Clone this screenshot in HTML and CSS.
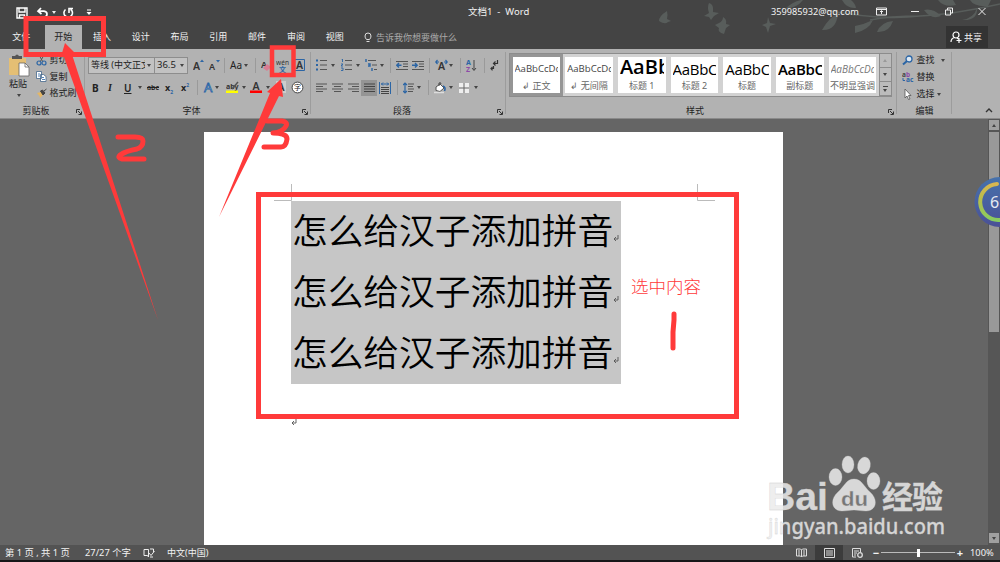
FILE: index.html
```html
<!DOCTYPE html>
<html lang="zh-CN">
<head>
    <meta charset="UTF-8">
    <meta name="viewport" content="width=device-width, initial-scale=1.0">
    <title>文档1 - Word</title>
    <link rel="stylesheet" href="styles.css">
</head>
<body>
    <header class="top">
        <!-- Leaves and birds behind the title bar -->
        <svg class="top-art" width="400" height="49" viewBox="600 0 400 49">
            <g fill="#585d5b">
                <path d="M667 11q-8 5-8 10 6 4 9 1l3-1-4-2q1-4 0-8z"/>
                <path d="M709 3q5 1 4 9l6 1-5 3-3 4-2-3-5-1 5-3q-2-6 0-10z"/>
                <path d="M723 17q4 2 3 7l4 1-4 3-2 6q-7-2-5-6l-4-3 4-2q4-2 4-6z"/>
                <path d="M768 17l2 6 6 1-6 2-2 7-2-6-4-2 5-2z"/>
                <path d="M801 0q-9 2-16 9 12-1 18-9z"/>
                <path d="M838 14q-8 2-16 16 14 1 16-16z"/>
                <path d="M855 26q10-2 18-6-4 10-18 13z"/>
                <path d="M842 0q5 9 14 8-1-5-5-8z"/>
                <path d="M893 21q-12 1-16 11 12 1 16-11z"/>
                <path d="M924 10q9-2 17 6-10 4-17-6z"/>
                <path d="M938 0q6 8 18 5l-3-5z"/>
                <path d="M962 20q12-2 15-12 1 13-15 12z"/>
                <path d="M970 0q4 7 18 6l3-6z"/>
            </g>
            <path d="M820 9q60 12 100 7 30-1 80-12M870 20q20-4 50-4" fill="none" stroke="#585d5b" stroke-width="1.5"/>
        </svg>

        <div class="titlebar">
            <div class="quick">
                <svg width="12" height="12" viewBox="0 0 12 12"><path d="M1 1h10v10H1zM3 1v4h6V1M3.5 11V8h5v3" fill="none" stroke="#fff" stroke-width="1.4"/></svg>
                <svg width="13" height="12" viewBox="0 0 13 12"><path d="M5 1L2 4.2 5.500 7M2 4.200h6q3 .3 3 3t-3.500 3" fill="none" stroke="#fff" stroke-width="1.700"/></svg>
                <i class="caret light"></i>
                <svg width="12" height="12" viewBox="0 0 12 12"><path d="M3.500 2.500A4.300 4.300 0 1 0 8.500 2.200M7 6V1.500h4" fill="none" stroke="#fff" stroke-width="1.600"/></svg>
                <svg width="6" height="7" viewBox="0 0 6 7"><path d="M1 1h4" stroke="#fff"/><path d="M.5 3h5L3 6z" fill="#fff"/></svg>
            </div>
            <div class="doc-title">文档1 &nbsp;- &nbsp;Word</div>
            <div class="account">359985932@qq.com</div>
            <div class="window-buttons">
                <svg width="11" height="9" viewBox="0 0 11 9"><path d="M.5 1h10v7H.5zM.5 2.500h10M5.500 7V4M4 5l1.500-1.500L7 5" fill="none" stroke="#eee"/></svg>
                <svg width="8" height="9" viewBox="0 0 8 9"><path d="M0 4.500h8" stroke="#eee"/></svg>
                <svg width="8" height="9" viewBox="0 0 8 9"><path d="M.5 3h5v5h-5zM2.500 3V1h5v5h-2" fill="none" stroke="#eee"/></svg>
                <svg width="8" height="9" viewBox="0 0 8 9"><path d="M.5 1l7 7M7.500 1l-7 7" stroke="#eee"/></svg>
            </div>
        </div>

        <nav class="tabs">
            <span class="tab file">文件</span>
            <span class="tab active">开始</span>
            <span class="tab">插入</span>
            <span class="tab">设计</span>
            <span class="tab">布局</span>
            <span class="tab">引用</span>
            <span class="tab">邮件</span>
            <span class="tab">审阅</span>
            <span class="tab">视图</span>
            <span class="tell-me">
                <svg width="8" height="11" viewBox="0 0 8 11"><path d="M2.500 7.500Q1 6 1 4a3 3 0 0 1 6 0q0 2-1.500 3.500zM2.500 9.500h3" fill="none" stroke="#ddd"/></svg>
                告诉我你想要做什么
            </span>
            <span class="share">
                <svg width="12" height="12" viewBox="0 0 12 12"><circle cx="6" cy="4" r="3" fill="none" stroke="#fff" stroke-width="1.200"/><path d="M1 11q0-3.500 3.500-4.500M7 7l1.500 1M9 7v5M6.500 9.500h5" fill="none" stroke="#fff" stroke-width="1.200"/></svg>
                共享
            </span>
        </nav>
    </header>

    <section class="ribbon">
        <!-- Clipboard -->
        <div class="group clipboard">
            <div class="clip-body">
                <div class="paste">
                    <svg width="22" height="24" viewBox="0 0 22 24"><path d="M1 4h17v17H1z" fill="#e5bf74"/><path d="M4 2h3q2-3 4 0h3v3H4z" fill="#555"/><path d="M11 9h6l4 4v9H11z" fill="#fff" stroke="#666" stroke-width=".8"/><path d="M17 9v4h4" fill="none" stroke="#666" stroke-width=".8"/></svg>
                    <span>粘贴</span>
                    <i class="caret"></i>
                </div>
                <div class="clip-list">
                    <div><svg width="11" height="11" viewBox="0 0 11 11"><path d="M3 0l4 7M8 0L4 7" stroke="#555"/><g fill="none" stroke="#2b65a5" stroke-width="1.200"><circle cx="3" cy="8" r="2"/><circle cx="8" cy="8" r="2"/></g></svg>剪切</div>
                    <div><svg width="11" height="11" viewBox="0 0 11 11"><g fill="#fff" stroke="#44678b" stroke-width=".8"><path d="M.5.500h5v7h-5zM4.500 3.500h3l2.500 2v5H4.500z"/></g><path d="M2 3h2M2 5h2M6 6.500h2M6 8.500h3" stroke="#2b65a5" stroke-width=".8"/></svg>复制</div>
                    <div><svg width="11" height="11" viewBox="0 0 11 11"><path d="M1 5l4-1 2 3-3 3q0-2-3-5z" fill="#e5b765"/><path d="M4.500 3l2-1 2.500 3-2 2zM8 3l2.500-2" fill="#444" stroke="#444"/></svg>格式刷</div>
                </div>
            </div>
            <div class="group-name">剪贴板</div>
            <svg class="launcher" width="6" height="6" viewBox="0 0 6 6"><path d="M.5 4V.5H4M2 2l3 3M5.500 2.500v3h-3" fill="none" stroke="#333"/></svg>
        </div>

        <!-- Font -->
        <div class="group font">
            <div class="font-row-1">
                <div class="combo"><span>等线 (中文正文)</span><i class="caret"></i></div>
                <div class="combo size"><span>36.5</span><i class="caret"></i></div>
                <svg width="12" height="13" viewBox="0 0 12 13"><text x="0" y="11" class="glyph">A</text><path d="M7 3l2-2.500L11 3z" fill="#2b65a5"/></svg>
                <svg width="12" height="13" viewBox="0 0 12 13"><text x="0" y="11" class="glyph small">A</text><path d="M7 1h4L9 3.500z" fill="#2b65a5"/></svg>
                <i class="sep"></i>
                <span class="aa">Aa</span>
                <i class="caret"></i>
                <i class="sep"></i>
                <svg width="12" height="13" viewBox="0 0 12 13"><text x="0" y="9" class="glyph small">A</text><path d="M2 9l4-4 4 3-4 4z" fill="#d97c92"/></svg>
                <svg width="14" height="15" viewBox="0 0 14 15"><text x="0" y="6.500" font-size="6.500" fill="#333" textLength="13">wén</text><text x="3" y="13.500" font-size="7" font-weight="700" fill="#2b65a5">文</text></svg>
                <svg width="11" height="12" viewBox="0 0 11 12"><path d="M.5.500h10v11H.5z" fill="none" stroke="#2b65a5"/><text x="2" y="9.500" class="glyph">A</text></svg>
            </div>
            <div class="font-row-2">
                <b>B</b>
                <em>I</em>
                <u>U</u>
                <i class="caret"></i>
                <s>abc</s>
                <span class="script">x<sub>2</sub></span>
                <span class="script">x<sup>2</sup></span>
                <i class="sep"></i>
                <svg width="11" height="13" viewBox="0 0 11 13"><text x="1" y="11" font-size="13" fill="#c4d3e3" stroke="#2b65a5" stroke-width=".8">A</text></svg>
                <i class="caret"></i>
                <svg width="14" height="13" viewBox="0 0 14 13"><text x="0" y="8" font-size="7" font-weight="700" fill="#333">aby</text><path d="M6 8l6-7" stroke="#555" stroke-width="1.500"/><path d="M0 9.500h12V12H0z" fill="#ff0"/></svg>
                <i class="caret"></i>
                <svg width="13" height="13" viewBox="0 0 13 13"><text x="2.500" y="8.500" class="glyph">A</text><path d="M0 9.500h12V12H0z" fill="#f00"/></svg>
                <i class="caret"></i>
                <svg width="11" height="13" viewBox="0 0 11 13"><path d="M0 0h10v12H0z" fill="#ccc"/><text x="1.500" y="10" class="glyph">A</text></svg>
                <svg width="13" height="13" viewBox="0 0 13 13"><circle cx="6.500" cy="6.500" r="5.400" fill="#fff" stroke="#333" stroke-width=".9"/><text x="3" y="9" font-size="7" fill="#222">字</text></svg>
            </div>
            <div class="group-name">字体</div>
            <svg class="launcher" width="6" height="6" viewBox="0 0 6 6"><path d="M.5 4V.5H4M2 2l3 3M5.500 2.500v3h-3" fill="none" stroke="#333"/></svg>
        </div>

        <!-- Paragraph -->
        <div class="group paragraph">
            <div class="para-row-1">
                <svg width="11" height="12" viewBox="0 0 11 12"><path d="M0 1.500h2M0 6h2M0 10.500h2" stroke="#2b65a5" stroke-width="2"/><path d="M4 1.500h7M4 6h7M4 10.500h7" stroke="#555"/></svg>
                <i class="caret"></i>
                <svg width="11" height="12" viewBox="0 0 11 12"><path d="M.5 0h1v3M0 5h2l-2 2h2M0 9h2v2.500H0" fill="none" stroke="#2b65a5" stroke-width=".9"/><path d="M4 1.500h7M4 6h7M4 10.500h7" stroke="#555"/></svg>
                <i class="caret"></i>
                <svg width="13" height="12" viewBox="0 0 13 12"><path d="M1 0v3M3 5h2v2H3M7 9v3" fill="none" stroke="#2b65a5" stroke-width="1.400"/><path d="M3 1.500h8M7 6h5M9 10.500h3" stroke="#555"/></svg>
                <i class="caret"></i>
                <i class="sep"></i>
                <svg width="12" height="11" viewBox="0 0 12 11"><path d="M0 1.500h12M7 4h5M7 6.500h5M0 9.500h12" stroke="#555"/><path d="M5.500 5.300H1M3 3L.8 5.300 3 7.500" fill="none" stroke="#2b65a5" stroke-width="1.400"/></svg>
                <svg width="12" height="11" viewBox="0 0 12 11"><path d="M0 1.500h12M7 4h5M7 6.500h5M0 9.500h12" stroke="#555"/><path d="M0 5.300h5M3 3l2.200 2.300L3 7.500" fill="none" stroke="#2b65a5" stroke-width="1.400"/></svg>
                <i class="sep"></i>
                <svg width="13" height="12" viewBox="0 0 13 12"><text x="3" y="11" class="glyph">A</text><path d="M4 3H1M2.500 1L.7 3l1.800 2M9 3h3M10.500 1l1.800 2-1.800 2" fill="none" stroke="#2b65a5" stroke-width="1.200"/></svg>
                <i class="caret"></i>
                <i class="sep"></i>
                <svg width="11" height="13" viewBox="0 0 11 13"><text x="0" y="6" font-size="7" font-weight="700" fill="#2b65a5">A</text><text x="0" y="12.500" font-size="7" font-weight="700" fill="#8d4aa8">Z</text><path d="M8 1v10M6 9l2 2.500L10 9" fill="none" stroke="#444"/></svg>
                <i class="sep"></i>
                <svg width="9" height="11" viewBox="0 0 9 11"><path d="M7.500 0v3.500H4M5.500 1.500l-2 2 2 2M3.500 6v2.500H1M2.500 6.800L1 8.500l1.500 1.800" fill="none" stroke="#333" stroke-width="1.200"/></svg>
            </div>
            <div class="para-row-2">
                <svg width="11" height="10" viewBox="0 0 11 10"><path d="M0 1h11M0 3.500h7M0 6h11M0 8.500h7" stroke="#555"/></svg>
                <svg width="11" height="10" viewBox="0 0 11 10"><path d="M0 1h11M2 3.500h7M0 6h11M2 8.500h7" stroke="#555"/></svg>
                <svg width="11" height="10" viewBox="0 0 11 10"><path d="M0 1h11M4 3.500h7M0 6h11M4 8.500h7" stroke="#555"/></svg>
                <span class="pressed"><svg width="11" height="10" viewBox="0 0 11 10"><path d="M0 1h11M0 3.500h11M0 6h11M0 8.500h11" stroke="#444"/></svg></span>
                <svg width="12" height="12" viewBox="0 0 12 12"><path d="M.5 0v12M11.500 0v12M2 2h8M4 .5L2.500 2 4 3.500M8 .5L9.500 2 8 3.500" fill="none" stroke="#2b65a5"/><path d="M2 5.500h8M2 7.500h8M2 9.500h8M2 11.500h8" stroke="#444"/></svg>
                <i class="sep"></i>
                <svg width="11" height="12" viewBox="0 0 11 12"><path d="M2 1v10M0 3l2-2 2 2M0 9l2 2 2-2" fill="none" stroke="#2b65a5" stroke-width="1.200"/><path d="M5 2h6M5 4.500h5M5 7h6M5 9.500h5" stroke="#555"/></svg>
                <i class="caret"></i>
                <i class="sep"></i>
                <svg width="12" height="12" viewBox="0 0 12 12"><path d="M2 5l4-3 4 4-4 3.500-4-1z" fill="#fff" stroke="#555"/><path d="M5 4V1q2-1 2 1" fill="none" stroke="#444"/><path d="M9 4q3 1 1.500 5" fill="none" stroke="#2b65a5" stroke-width="1.600"/><path d="M0 10.500h10" stroke="#ddd" stroke-width="1.500"/></svg>
                <i class="caret"></i>
                <svg width="10" height="10" viewBox="0 0 10 10"><path d="M0 0h10v10H0z" fill="#eee"/><path d="M5 0v10M0 5h10" stroke="#666"/></svg>
                <i class="caret"></i>
            </div>
            <div class="group-name">段落</div>
            <svg class="launcher" width="6" height="6" viewBox="0 0 6 6"><path d="M.5 4V.5H4M2 2l3 3M5.500 2.500v3h-3" fill="none" stroke="#333"/></svg>
        </div>

        <!-- Style gallery -->
        <div class="group styles">
            <div class="gallery">
                <div class="style selected"><p>AaBbCcDd</p><span>↲ 正文</span></div>
                <div class="style"><p>AaBbCcDd</p><span>↲ 无间隔</span></div>
                <div class="style"><p class="h1">AaBb</p><span>标题 1</span></div>
                <div class="style"><p class="h2">AaBbC</p><span>标题 2</span></div>
                <div class="style"><p class="h2">AaBbC</p><span>标题</span></div>
                <div class="style"><p class="h2 bold">AaBbC</p><span>副标题</span></div>
                <div class="style"><p class="subtle">AaBbCcDd</p><span>不明显强调</span></div>
                <div class="gallery-scroll">
                    <span class="off"><i class="caret up"></i></span>
                    <span><i class="caret"></i></span>
                    <span class="more"><i class="caret"></i></span>
                </div>
            </div>
            <div class="group-name">样式</div>
            <svg class="launcher" width="6" height="6" viewBox="0 0 6 6"><path d="M.5 4V.5H4M2 2l3 3M5.500 2.500v3h-3" fill="none" stroke="#333"/></svg>
        </div>

        <!-- Editing -->
        <div class="group editing">
            <div class="edit-list">
                <div><svg width="12" height="11" viewBox="0 0 12 11"><circle cx="7" cy="4" r="3" fill="#dce8f3" stroke="#2b65a5" stroke-width="1.300"/><path d="M5 6L1 9.500" stroke="#2b65a5" stroke-width="2"/></svg>查找<i class="caret far"></i></div>
                <div><svg width="12" height="12" viewBox="0 0 12 12"><text x="0" y="5.500" font-size="6.500" font-weight="700" fill="#444">a<tspan fill="#8d4aa8">b</tspan></text><text x="4" y="11" font-size="6.500" font-weight="700" fill="#2b65a5">ac</text><path d="M1 7v2.500h2" fill="none" stroke="#2b65a5"/></svg>替换</div>
                <div><svg width="12" height="11" viewBox="0 0 12 11"><path d="M3 0v9l2-2 1.500 3.500L8 10 6.500 6.500H9z" fill="#fff" stroke="#555" stroke-width=".8"/></svg>选择<i class="caret"></i></div>
            </div>
            <div class="group-name">编辑</div>
        </div>

        <svg class="collapse" width="8" height="5" viewBox="0 0 8 5"><path d="M1 4l3-3 3 3" fill="none" stroke="#333" stroke-width="1.400"/></svg>
    </section>

    <main class="workspace">
        <article class="page">
            <div class="margins">
                <svg width="18" height="17" viewBox="0 0 18 17"><path d="M17.500 0v16.500H0" fill="none" stroke="#bbb"/></svg>
                <svg width="18" height="17" viewBox="0 0 18 17"><path d="M.5 0v16.500H18" fill="none" stroke="#bbb"/></svg>
            </div>
            <div class="content">
                <div class="selection">
                    <p>怎么给汉子添加拼音<svg width="6" height="7" viewBox="0 0 6 7"><path d="M5 0v4H1M3 2L1 4l2 2" fill="none" stroke="#555" stroke-width=".9"/></svg></p>
                    <p>怎么给汉子添加拼音<svg width="6" height="7" viewBox="0 0 6 7"><path d="M5 0v4H1M3 2L1 4l2 2" fill="none" stroke="#555" stroke-width=".9"/></svg></p>
                    <p>怎么给汉子添加拼音<svg width="6" height="7" viewBox="0 0 6 7"><path d="M5 0v4H1M3 2L1 4l2 2" fill="none" stroke="#555" stroke-width=".9"/></svg></p>
                </div>
                <svg class="last-mark" width="6" height="7" viewBox="0 0 6 7"><path d="M5 0v4H1M3 2L1 4l2 2" fill="none" stroke="#555" stroke-width=".9"/></svg>
            </div>
        </article>
        <div class="scrollbar">
            <span class="scroll-btn"><i class="caret up"></i></span>
            <span class="thumb"></span>
            <span class="scroll-btn"><i class="caret"></i></span>
        </div>
    </main>

    <footer class="status">
        <span class="pages">第 1 页 , 共 1 页</span>
        <span class="words">27/27 个字</span>
        <svg class="proof" width="12" height="10" viewBox="0 0 12 10"><path d="M5 1.500H1v6h3.500L5.500 9V1.500zM7 1h3.500v3M6 5l2 2.500L11.500 3M7 9h3" fill="none" stroke="#eee"/></svg>
        <span class="lang">中文(中国)</span>
        <div class="views">
            <span><svg width="11" height="10" viewBox="0 0 11 10"><path d="M.5 1h4l1 1 1-1h4v7h-4l-1 1-1-1h-4zM5.500 2v7M2 3h2M2 5h2M2 7h2M7 3h2M7 5h2M7 7h2" fill="none" stroke="#ddd"/></svg></span>
            <span class="current"><svg width="11" height="10" viewBox="0 0 11 10"><path d="M.5.500h10v9H.5zM2 3h7M2 5h7M2 7h7" fill="none" stroke="#ddd"/></svg></span>
            <span><svg width="11" height="10" viewBox="0 0 11 10"><path d="M4 9H.5V.5h8V4M2 3h5M2 5h3M2 7h2" fill="none" stroke="#ddd"/><circle cx="8" cy="7" r="2.300" fill="none" stroke="#ddd" stroke-width="1.300"/></svg></span>
        </div>
        <b class="zoom-sign">−</b>
        <div class="slider"><i></i></div>
        <b class="zoom-sign">+</b>
        <span class="percent">100%</span>
    </footer>

    <!-- Hand-drawn marks and floating items over the window -->
    <svg class="overlay" width="1000" height="562" viewBox="0 0 1000 562">
        <defs>
            <linearGradient id="ball" x1="0" y1="0" x2="0" y2="1"><stop offset="0" stop-color="#4672ac"/><stop offset="1" stop-color="#4a5096"/></linearGradient>
            <linearGradient id="ring" x1="0" y1="0" x2="0" y2="1"><stop offset="0" stop-color="#d8b651"/><stop offset=".4" stop-color="#b9bd4c"/><stop offset="1" stop-color="#88cc60"/></linearGradient>
        </defs>
        <circle cx="999.500" cy="202" r="25" fill="url(#ball)"/>
        <path d="M997 184A18 18 0 0 0 999.500 220" fill="none" stroke="url(#ring)" stroke-width="4" stroke-linecap="round"/>
        <text x="990" y="208" font-size="16" fill="#e6eaf2">6</text>

        <g class="watermark">
            <text x="767" y="510" font-size="38" class="bai" textLength="61" lengthAdjust="spacingAndGlyphs">Bai</text>
            <path d="M854 479c8 0 10 8 16 13 9 8 6 19-4 19-5 0-8-1-12-1s-7 1-12 1c-10 0-13-11-4-19 6-5 8-13 16-13z"/>
            <ellipse cx="835.500" cy="477" rx="6.500" ry="8.500"/>
            <ellipse cx="848" cy="464.500" rx="6" ry="8.500"/>
            <ellipse cx="864" cy="465.500" rx="6.300" ry="8.500" transform="rotate(12 864 465.500)"/>
            <ellipse cx="873.500" cy="481" rx="6.500" ry="8.500"/>
            <text x="841" y="506" font-size="21" class="du" textLength="27" lengthAdjust="spacingAndGlyphs">du</text>
            <text x="882" y="508" font-size="31" font-weight="700" textLength="61">经验</text>
            <text x="768" y="534" font-size="21.500" font-weight="500" textLength="177" lengthAdjust="spacingAndGlyphs">jingyan.baidu.com</text>
        </g>

        <g fill="none" stroke="#ff3a3a">
            <rect x="26" y="18.500" width="77.500" height="36" stroke-width="5"/>
            <rect x="272" y="47.500" width="21.500" height="27.500" stroke-width="4.500"/>
            <rect x="258.500" y="194.500" width="478" height="222" stroke-width="5"/>
            <g stroke-width="5" stroke-linecap="round" stroke-linejoin="round">
                <path d="M118 137h17q8 0 8 4 0 6-6 8-11 2-17 6-3 3 2 4h22"/>
                <path d="M267 121h15q6 1 4 5-3 6-13 7 14 0 14 6-1 8-6 8h-17"/>
                <path d="M674 314v6l-1 12v16"/>
            </g>
        </g>
        <g fill="#ff3a3a">
            <path d="M65 43l10 10-3 1 .5 2L158 320 64 57l-2-4z"/>
            <path d="M281 79l2 18-4-1L219 217l51-124-3-1z"/>
            <text x="631" y="293" class="note" textLength="70">选中内容</text>
        </g>
    </svg>
</body>
</html>
```
FILE: styles.css
```css
* {
    box-sizing: border-box;
}

body {
    margin: 0;
    width: 1000px;
    height: 562px;
    overflow: hidden;
    display: flex;
    flex-direction: column;
    background-color: #161618;
    font-family: "Noto Sans", "Noto Sans CJK SC", sans-serif;
    font-size: 9px;
    line-height: 12px;
    color: #222;
}

p {
    margin: 0;
}

svg {
    display: block;
    flex-shrink: 0;
}

/* Title bar and tabs */
.top {
    position: relative;
    height: 49px;
    background-color: #444;
    color: #f2f2f2;
}

.top-art {
    position: absolute;
    right: 0;
    top: 0;
}

.titlebar {
    position: relative;
    height: 25px;
    display: grid;
    grid-template-columns: 468px 303px 105px 1fr;
    align-items: center;
    padding-bottom: 2px;
}

.quick {
    display: grid;
    grid-template-columns: 20px 16px 10px 24px 10px;
    align-items: center;
    padding: 2px 0 0 16px;
}

.doc-title {
    font-size: 9.500px;
}

.account {
    font-size: 9.200px;
}

.window-buttons {
    display: grid;
    grid-template-columns: 35px 34px 33px 10px;
}

.tabs {
    position: relative;
    display: flex;
    height: 24px;
    line-height: 23px;
}

.tab {
    width: 38.800px;
    text-align: center;
}

.file {
    width: 44.500px;
    padding-right: 2px;
}

.active {
    background-color: #b2b2b2;
    color: #222;
    width: 37.500px;
    margin-right: .5px;
}

.tell-me {
    display: flex;
    align-items: center;
    gap: 4px;
    padding-left: 10px;
    color: #aaa;
}

.share {
    display: flex;
    align-items: center;
    gap: 2px;
    margin: 1px 12px 1px auto;
    padding-left: 4px;
    width: 42px;
    background-color: #333;
}

/* Ribbon */
.ribbon {
    position: relative;
    display: flex;
    height: 70px;
    background-color: #b2b2b2;
    border-bottom: 1px solid #8a8a8a;
}

.group {
    position: relative;
    display: flex;
    flex-direction: column;
    padding-top: 5px;
}

.group::after {
    content: "";
    position: absolute;
    right: 0;
    top: 3px;
    height: 62px;
    border-right: 1px solid #9c9c9c;
}

.group-name {
    margin-top: auto;
    height: 13.500px;
    text-align: center;
}

.launcher {
    position: absolute;
    right: 3px;
    bottom: 3px;
}

.clipboard { width: 85px; }
.font { width: 226px; }
.paragraph { width: 195px; }
.styles { width: 391px; }
.editing { width: 55px; }

.clipboard .group-name {
    padding-right: 13px;
}

.font .group-name,
.paragraph .group-name,
.styles .group-name {
    padding-right: 13px;
}

.caret {
    width: 0;
    height: 0;
    border: 2.500px solid transparent;
    border-top: 3px solid #444;
    border-bottom: 0;
}

.caret.light {
    border-top-color: #eee;
}

.caret.up {
    border-top: 0;
    border-bottom: 3px solid #444;
}

.sep {
    width: 1px;
    height: 15px;
    background-color: #9a9a9a;
}

.glyph {
    font-size: 10.500px;
    font-weight: 600;
    fill: #333;
}

.glyph.small {
    font-size: 9px;
}

.clip-body {
    display: flex;
}

.paste {
    width: 28px;
    margin-left: 8px;
    display: flex;
    flex-direction: column;
    align-items: flex-start;
}

.paste span {
    margin: 0 0 4px 1px;
}

.paste .caret {
    margin-left: 9px;
}

.clip-list {
    display: flex;
    flex-direction: column;
    gap: 4.500px;
}

.clip-list div,
.edit-list div {
    display: flex;
    align-items: center;
    gap: 2.500px;
    height: 12px;
    white-space: nowrap;
}

.font-row-1,
.font-row-2,
.para-row-1,
.para-row-2 {
    display: grid;
    align-items: center;
    justify-items: start;
}

.font-row-1 {
    grid-template-columns: 66px 39px 16px 15px 6px 14px 11px 6px 15px 18px 11px;
    height: 22px;
    padding-left: 3px;
}

.font-row-2 {
    grid-template-columns: 16px 16px 14px 9px 18px 16px 16px 6px 12px 11px 16px 8px 16px 10px 15px 13px;
    height: 23px;
    padding-left: 7px;
    font-size: 10px;
}

.combo {
    display: flex;
    align-items: center;
    justify-content: space-between;
    width: 67px;
    height: 17px;
    padding: 0 3px 0 2px;
    border: 1px solid #8d8d8d;
    background-color: #c2c2c2;
    white-space: nowrap;
}

.combo span {
    width: 54px;
    overflow: hidden;
}

.size {
    width: 34px;
    font-size: 9.500px;
}

.size span {
    width: 22px;
}

.aa {
    font-size: 10px;
}

.font-row-2 s {
    font-size: 7px;
    font-weight: 600;
}

.font-row-2 em {
    font-family: "Liberation Serif", serif;
    font-weight: 700;
}

.font-row-2 u {
    font-weight: 600;
}

.script {
    font-size: 9px;
    font-weight: 700;
    white-space: nowrap;
}

.script sub,
.script sup {
    font-size: 5px;
    line-height: 0;
    color: #2b65a5;
}

.para-row-1 {
    grid-template-columns: 15px 10px 15px 9px 15px 10px 6px 16px 17px 6px 14px 11px 6px 18px 6px 9px;
    height: 22px;
    padding-left: 5px;
}

.para-row-2 {
    grid-template-columns: 16px 16px 13px 18px 18px 6px 14px 11px 6px 15px 10px 15px 5px;
    height: 23px;
    padding-left: 5px;
}

.pressed {
    padding: 3px 2.500px;
    background-color: #949494;
}

/* Style gallery */
.gallery {
    display: grid;
    grid-template-columns: repeat(7, 52.700px) 12px;
    width: 383px;
    height: 44px;
    margin: -1px 0 0 3px;
    border: 1px solid #8c8c8c;
    background-color: #d2d2d2;
}

.style {
    display: flex;
    flex-direction: column;
    margin: 3px 2.500px;
    background-color: #fff;
    text-align: center;
    color: #666;
    white-space: nowrap;
}

.style span {
    margin-top: 1px;
}

.selected {
    outline: 3px solid #959595;
}

.style p {
    height: 22px;
    margin: 0 2px;
    overflow: hidden;
    text-align: left;
    font-family: "Open Sans", sans-serif;
    font-size: 9.600px;
    line-height: 24px;
    color: #444;
}

.style p.h1 {
    font-size: 20px;
    font-weight: 600;
    color: #000;
    line-height: 20px;
}

.style p.h2 {
    font-size: 15px;
    letter-spacing: -.3px;
    color: #000;
}

.style p.bold {
    font-weight: 600;
}

.style p.subtle {
    font-style: italic;
    font-size: 10px;
    color: #777;
}

.gallery-scroll {
    display: grid;
    grid-template-rows: repeat(3, 14px);
    border-left: 1px solid #8c8c8c;
    background-color: #bbb;
}

.gallery-scroll span {
    display: grid;
    place-content: center;
    border-bottom: 1px solid #8c8c8c;
}

.gallery-scroll .off .caret {
    border-bottom-color: #999;
}

.gallery-scroll .more::before {
    content: "";
    width: 5px;
    margin-bottom: 2px;
    border-top: 1px solid #444;
}

.edit-list {
    display: flex;
    flex-direction: column;
    gap: 5px;
    padding-left: 5px;
}

.edit-list .far {
    margin-left: 4px;
}

.collapse {
    position: absolute;
    right: 7px;
    bottom: 5px;
}

/* Document area */
.workspace {
    display: flex;
    height: 426px;
    background-color: #656565;
}

.page {
    width: 579px;
    height: 413px;
    margin: 13px auto 0 204px;
    background-color: #fff;
}

.margins {
    display: flex;
    justify-content: space-between;
    width: 441px;
    margin-left: 70px;
    padding-top: 52px;
}

.content {
    padding-left: 87px;
}

.selection {
    width: 330px;
    height: 183px;
    background-color: #c6c6c6;
}

.selection p {
    display: flex;
    align-items: center;
    height: 61px;
    padding: 0 0 5px 1px;
    font-family: "Noto Sans CJK SC", sans-serif;
    font-weight: 350;
    font-size: 35.700px;
    line-height: 56px;
    color: #000;
    white-space: nowrap;
}

.selection svg {
    margin-top: 19px;
}

.last-mark {
    margin: 35px 0 0 0;
}

.scrollbar {
    display: flex;
    flex-direction: column;
    align-items: center;
    width: 12px;
    padding: 1px 0 2px;
    background-color: #565656;
}

.scroll-btn {
    display: grid;
    place-content: center;
    width: 10px;
    height: 10px;
    background-color: #a0a0a0;
}

.scroll-btn:last-child {
    margin-top: auto;
}

.thumb {
    width: 10px;
    height: 200px;
    margin-top: 2px;
    background-color: #999;
}

/* Status bar */
.status {
    display: flex;
    align-items: center;
    height: 15px;
    padding-left: 5px;
    background-color: #535353;
    color: #f2f2f2;
}

.pages {
    width: 80px;
    font-size: 9.300px;
}

.words {
    width: 58px;
    font-size: 9.300px;
}

.proof {
    margin-right: 12px;
}

.views {
    display: flex;
    height: 15px;
    margin-left: auto;
}

.views span {
    display: grid;
    place-content: center;
    width: 28px;
}

.views .current {
    background-color: #3c3c3c;
}

.zoom-sign {
    width: 10px;
    text-align: center;
    font-size: 11px;
}

.slider {
    width: 74px;
    height: 1px;
    display: flex;
    align-items: center;
    justify-content: center;
    margin: 0;
    background-color: #bbb;
}

.slider i {
    width: 3px;
    height: 8px;
    background-color: #fff;
}

.percent {
    width: 30px;
    margin-left: 5px;
    font-size: 9.300px;
}

.overlay {
    position: absolute;
    left: 0;
    top: 0;
}

.watermark {
    fill: #ececec;
    fill-opacity: .85;
    stroke: #d0d0d0;
    stroke-width: .3;
}

.watermark .bai,
.watermark .du {
    font-family: "Liberation Sans", sans-serif;
    font-weight: 700;
}

.watermark .du {
    fill: #666;
}

.note {
    font-family: "Noto Sans CJK SC", sans-serif;
    font-size: 17.500px;
    font-weight: 300;
}
```
